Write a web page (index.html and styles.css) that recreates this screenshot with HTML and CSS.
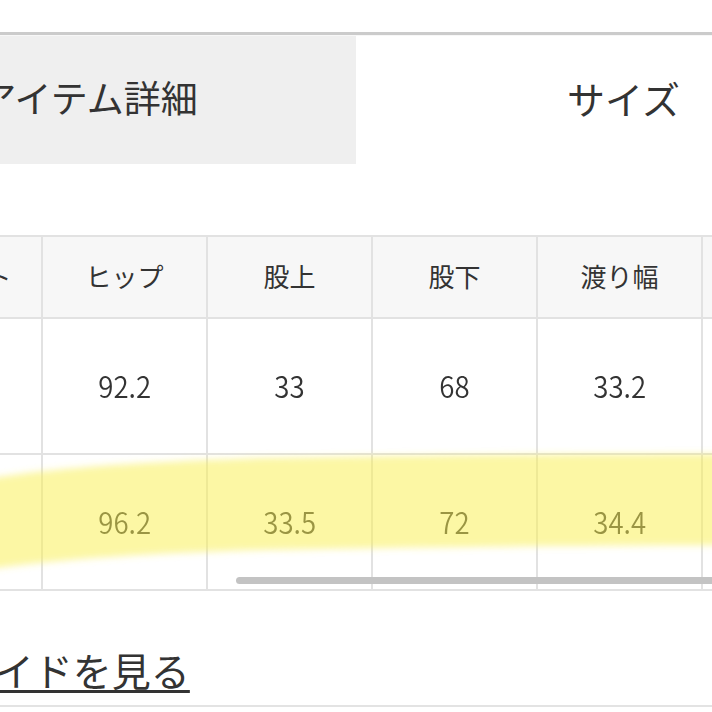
FILE: index.html
```html
<!DOCTYPE html>
<html lang="ja">
<head>
    <meta charset="utf-8">
    <meta name="viewport" content="width=device-width, initial-scale=1">
    <title>サイズ</title>
    <link rel="stylesheet" href="styles.css">
</head>
<body>
    <div class="page">
        <nav class="tabs">
            <a href="#detail" class="tab -active">アイテム詳細</a>
            <a href="#size" class="tab">サイズ</a>
        </nav>

        <div class="size-table">
            <table>
                <thead>
                    <tr>
                        <th>ウエスト</th>
                        <th>ヒップ</th>
                        <th>股上</th>
                        <th>股下</th>
                        <th>渡り幅</th>
                        <th>裾幅</th>
                    </tr>
                </thead>
                <tbody>
                    <tr>
                        <td><span class="num">76</span></td>
                        <td><span class="num">92.2</span></td>
                        <td><span class="num">33</span></td>
                        <td><span class="num">68</span></td>
                        <td><span class="num">33.2</span></td>
                        <td><span class="num">21</span></td>
                    </tr>
                    <tr>
                        <td><span class="num">80</span></td>
                        <td><span class="num">96.2</span></td>
                        <td><span class="num">33.5</span></td>
                        <td><span class="num">72</span></td>
                        <td><span class="num">34.4</span></td>
                        <td><span class="num">22</span></td>
                    </tr>
                </tbody>
            </table>
            <div class="scrollbar"></div>
        </div>

        <div class="guide">
            <a href="#guide" class="guide-link">サイズガイドを見る</a>
        </div>

        <!-- highlighter stroke drawn over the second row -->
        <svg class="marker" viewBox="0 0 712 712" width="712" height="712">
            <defs>
                <filter id="soft" x="-5%" y="-50%" width="110%" height="200%">
                    <feGaussianBlur stdDeviation="3.5" />
                </filter>
            </defs>
            <path d="M -20 480 C 40 470, 110 463, 260 458 C 420 455, 600 454, 730 454 L 730 545 C 560 546, 400 547, 260 550 C 150 553, 60 559, -20 570 Z"
                  fill="rgb(250, 240, 80)" fill-opacity=".52" filter="url(#soft)" />
        </svg>
    </div>
</body>
</html>
```

FILE: styles.css
```css
* { box-sizing: border-box; margin: 0; }

html,
body {
    overflow: hidden;
}

body {
    margin: 0;
    background: #fff;
    color: #333;
    font-family: "Noto Sans CJK JP", "Noto Sans", sans-serif;
}

.page {
    position: relative;
    width: 712px;
    height: 712px;
    overflow: hidden;
}

.tabs {
    display: flex;
    margin-top: 32px;
    margin-left: -179px;
    border-top: 3px solid #cbcbcb;
}

.tab {
    flex: 0 0 535px;
    height: 129px;
    display: flex;
    align-items: center;
    justify-content: center;
    padding-bottom: 6px;
    font-size: 37px;
    color: #333;
    text-decoration: none;
    border-top: 1px solid #f7f7f7;
}

.tab.-active {
    background: #efefef;
}

.tab:not(.-active) {
    font-size: 38px;
}

.size-table {
    position: relative;
    margin-top: 71px;
}

.size-table table {
    table-layout: fixed;
    border-collapse: collapse;
    width: 990px;
    margin-left: -124px;
}

.size-table th,
.size-table td {
    width: 165px;
    border: 2px solid #e2e2e2;
    text-align: center;
    font-weight: 400;
}

.size-table th {
    height: 82px;
    background: #f7f7f7;
    font-size: 26px;
    padding-bottom: 4px;
}

.size-table td {
    height: 136px;
    padding-bottom: 4px;
    font-size: 30px;
    font-weight: 350;
}

.num {
    display: inline-block;
    transform: scaleX(.92);
}

.scrollbar {
    position: absolute;
    left: 236px;
    right: -10px;
    bottom: 7px;
    height: 7px;
    border-radius: 4px;
    background: #c3c3c3;
}

.guide {
    height: 116px;
    padding-top: 50px;
    margin-left: -160px;
    border-bottom: 2px solid #e3e3e3;
}

.guide-link {
    font-size: 39px;
    font-weight: 400;
    color: #333;
    text-decoration: underline;
    text-decoration-thickness: 3px;
    text-underline-offset: 4px;
}

.marker {
    position: absolute;
    top: 0;
    left: 0;
    pointer-events: none;
}
```
